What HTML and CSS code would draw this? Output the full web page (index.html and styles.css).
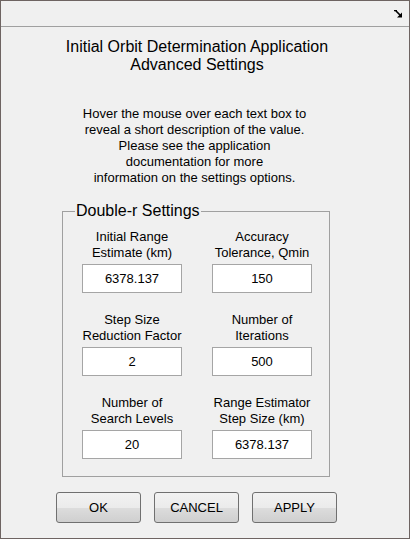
FILE: index.html
```html
<!DOCTYPE html>
<html>
<head>
<meta charset="utf-8">
<link rel="stylesheet" href="styles.css">
</head>
<body>
<div class="window">
  <div class="toolbar">
    <svg class="dock" width="9" height="8" viewBox="0 0 9 8">
      <path d="M0 0.5H3M1.5 0.5L6.5 5.5" stroke="#000" stroke-width="1.6" fill="none"/>
      <path d="M3 7.5H8V2.5Z" fill="#000"/>
    </svg>
  </div>
  <div class="content">
    <h1 class="title">Initial Orbit Determination Application<br>Advanced Settings</h1>
    <p class="desc">Hover the mouse over each text box to<br>reveal a short description of the value.<br>Please see the application<br>documentation for more<br>information on the settings options.</p>
    <fieldset class="group">
      <legend class="legend">Double-r Settings</legend>
      <div class="grid">
        <div class="field">
          <div class="label">Initial Range<br>Estimate (km)</div>
          <div class="input">6378.137</div>
        </div>
        <div class="field">
          <div class="label">Accuracy<br>Tolerance, Qmin</div>
          <div class="input">150</div>
        </div>
        <div class="field">
          <div class="label">Step Size<br>Reduction Factor</div>
          <div class="input">2</div>
        </div>
        <div class="field">
          <div class="label">Number of<br>Iterations</div>
          <div class="input">500</div>
        </div>
        <div class="field">
          <div class="label">Number of<br>Search Levels</div>
          <div class="input">20</div>
        </div>
        <div class="field">
          <div class="label">Range Estimator<br>Step Size (km)</div>
          <div class="input">6378.137</div>
        </div>
      </div>
    </fieldset>
    <div class="buttons">
      <div class="btn">OK</div>
      <div class="btn">CANCEL</div>
      <div class="btn">APPLY</div>
    </div>
  </div>
</div>
</body>
</html>
```

FILE: styles.css
```css
html, body {
  margin: 0;
  padding: 0;
  background: #f0f0f0;
}
.window {
  width: 410px;
  height: 539px;
  box-sizing: border-box;
  border: 1px solid #6e6462;
  background: #f0f0f0;
  font-family: "Liberation Sans", Arial, sans-serif;
  color: #000;
  overflow: hidden;
}
.toolbar {
  height: 25px;
  border-bottom: 1px solid #a0a0a0;
  display: flex;
  justify-content: flex-end;
  align-items: flex-start;
  padding-right: 6px;
}
.dock {
  margin-top: 9px;
}
.content {
  display: flex;
  flex-direction: column;
  align-items: flex-start;
}
.title {
  align-self: stretch;
  margin: 11px 0 0 0;
  font-size: 16px;
  font-weight: normal;
  line-height: 18px;
  text-align: center;
  padding-right: 16px;
}
.desc {
  align-self: stretch;
  margin: 32px 0 0 0;
  font-size: 13px;
  line-height: 16px;
  text-align: center;
  padding-right: 21px;
}
.group {
  margin: 15px 0 0 61px;
  padding: 8px 15px 17px 19px;
  width: 232px;
  border: 1px solid #a0a0a0;
  min-width: 0;
}
.legend {
  font-size: 16px;
  line-height: 20px;
  padding: 0 1px;
  margin-left: -7px;
}
.grid {
  display: grid;
  grid-template-columns: 100px 100px;
  column-gap: 30px;
  row-gap: 19px;
}
.field {
  display: flex;
  flex-direction: column;
  align-items: center;
}
.label {
  font-size: 13px;
  line-height: 16px;
  text-align: center;
  white-space: nowrap;
  margin-bottom: 3px;
}
.input {
  width: 100px;
  height: 29px;
  box-sizing: border-box;
  border: 1px solid #a5a5a5;
  background: #fff;
  font-size: 13px;
  display: flex;
  align-items: center;
  justify-content: center;
}
.buttons {
  display: flex;
  gap: 13px;
  margin: 15px 0 0 55px;
}
.btn {
  width: 85px;
  height: 31px;
  box-sizing: border-box;
  border: 1px solid #707070;
  border-radius: 3px;
  background: linear-gradient(#f2f2f2 0%, #ebebeb 50%, #dddddd 50%, #cfcfcf 100%);
  font-size: 13px;
  display: flex;
  align-items: center;
  justify-content: center;
}
```
